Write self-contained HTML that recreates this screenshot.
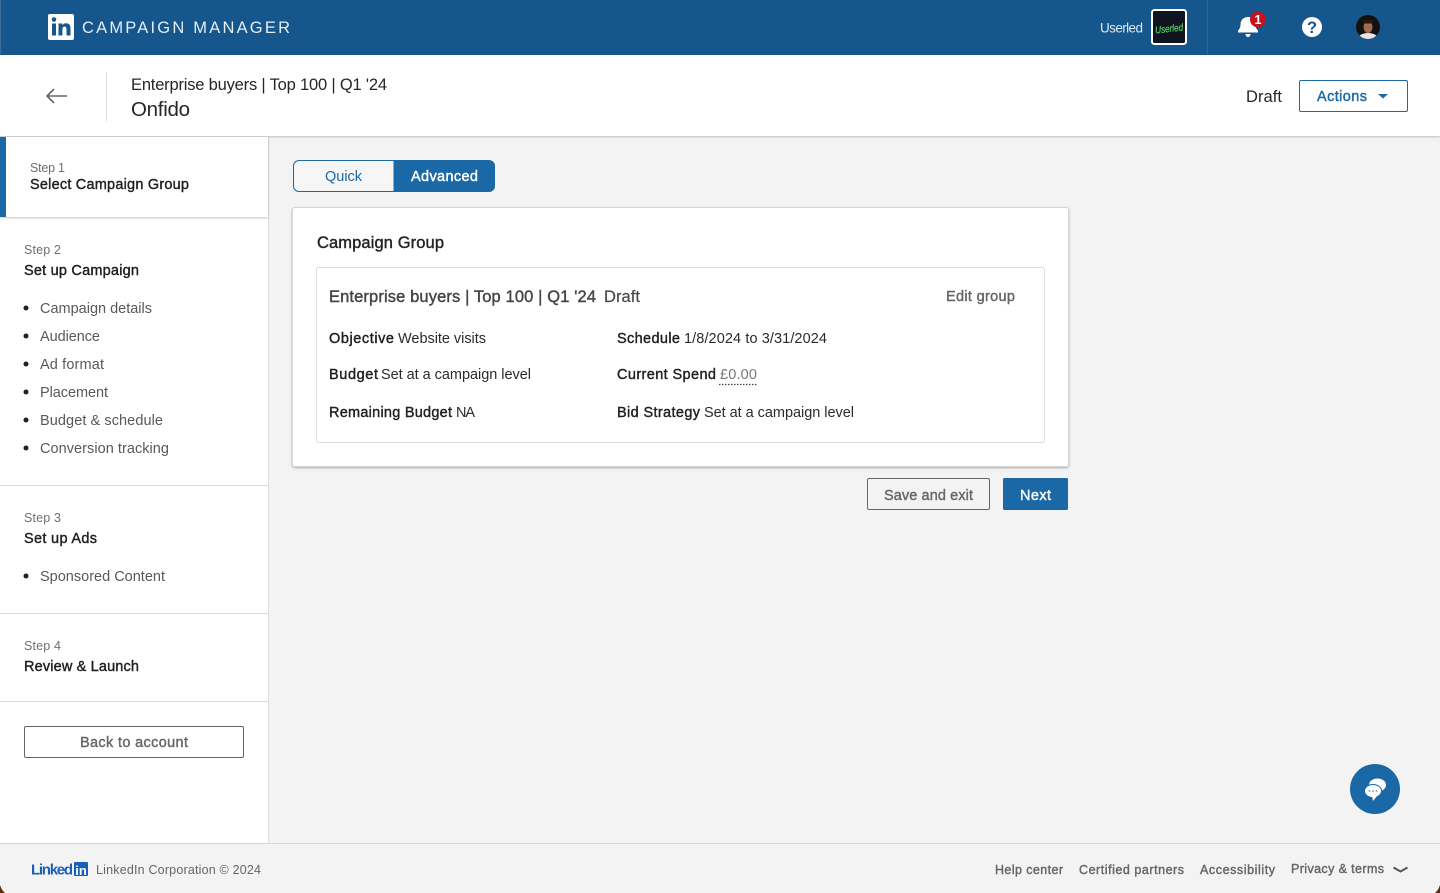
<!DOCTYPE html>
<html lang="en">
<head>
<meta charset="utf-8">
<title>Campaign Manager</title>
<style>
html,body{margin:0;padding:0;width:1440px;height:893px;overflow:hidden;background:#f3f3f3}
svg{display:block;position:absolute;left:0;top:0}
text{font-family:"Liberation Sans",Arial,sans-serif;white-space:pre}
.m{stroke:currentColor;stroke-width:.4px}
.b{font-weight:700}
.g12{font-size:12.500px;fill:#6e6e6e}
.h14{font-size:14.500px;fill:#1f1f1f;color:#1f1f1f}
.li{font-size:14.500px;fill:#595959}
.n{font-size:14.500px;fill:#2b2b2b}
.f{font-size:12.500px;fill:#666;color:#666}
</style>
</head>
<body>
<svg width="1440" height="893" viewBox="0 0 1440 893" xmlns="http://www.w3.org/2000/svg">
<defs>
<filter id="s1" x="-5%" y="-20%" width="110%" height="140%"><feDropShadow dx="0" dy="1" stdDeviation="1" flood-color="#000" flood-opacity=".22"/></filter>
<filter id="s2" x="-3%" y="-3%" width="106%" height="108%"><feDropShadow dx="0" dy="1" stdDeviation="1" flood-color="#000" flood-opacity=".3"/></filter>
<clipPath id="av"><circle cx="1368" cy="27" r="12"/></clipPath>
</defs>

<rect width="1440" height="893" fill="#f3f3f3"/>

<!-- top nav -->
<rect width="1440" height="55" fill="#15568c"/>
<rect x="0" y="0" width="1" height="55" fill="#3a6f9c"/>
<rect x="48" y="14" width="26" height="26" rx="2" fill="#fff"/>
<rect x="52" y="23.500" width="4" height="12" fill="#15568c"/>
<circle cx="54" cy="19.500" r="2.300" fill="#15568c"/>
<path d="M58.500 23.500h3.800v1.700c.8-1.200 2-2 3.800-2 3 0 4.400 1.900 4.400 5v7.300h-4v-6.500c0-1.500-.6-2.400-1.900-2.400-1.300 0-2.200.9-2.200 2.500v6.400h-3.900z" fill="#15568c"/>
<text x="82" y="33" font-size="16.500" fill="#e6edf3" textLength="208" lengthAdjust="spacing">CAMPAIGN MANAGER</text>
<text x="1100" y="32.500" font-size="13.500" fill="#dfe8f0" textLength="43" lengthAdjust="spacing">Userled</text>
<rect x="1152" y="10" width="34" height="34" rx="2.500" fill="#10141f" stroke="#fff" stroke-width="2"/>
<text x="1155" y="32" font-size="10" font-style="italic" fill="#4fc763" stroke="#4fc763" stroke-width=".3" textLength="28" lengthAdjust="spacingAndGlyphs" transform="rotate(-6 1169 28)" font-family="Liberation Serif">Userled</text>
<rect x="1207" y="0" width="1" height="55" fill="#2d6797"/>
<!-- bell -->
<path d="M1248 17c-5 0-7.500 3.500-7.500 7.500 0 2.800-.9 4.700-2.500 6v2h20v-2c-1.600-1.300-2.500-3.200-2.500-6 0-4-2.500-7.500-7.500-7.500z" fill="#fff"/>
<path d="M1245.500 34h5c0 1.700-1.100 3-2.500 3s-2.500-1.300-2.500-3z" fill="#fff"/>
<circle cx="1258" cy="19.500" r="8" fill="#c4141f"/>
<text x="1258" y="24" font-size="12.500" class="b" fill="#fff" text-anchor="middle">1</text>
<!-- help -->
<circle cx="1312" cy="27" r="10" fill="#fff"/>
<text x="1312" y="33" font-size="16.500" class="b" fill="#15568c" text-anchor="middle">?</text>
<!-- avatar -->
<g clip-path="url(#av)">
<rect x="1356" y="15" width="24" height="24" fill="#15110f"/>
<ellipse cx="1368" cy="39.500" rx="10.500" ry="6.500" fill="#efe3ea"/>
<ellipse cx="1368" cy="27" rx="4.500" ry="6" fill="#a06a53"/>
<rect x="1363.500" y="20" width="9" height="3.500" rx="1.500" fill="#2a1c16"/>
</g>

<!-- sub header -->
<rect x="0" y="55" width="1440" height="81" fill="#fff" filter="url(#s1)"/>
<path d="M47 96h20M54 89l-7 7 7 7" fill="none" stroke="#666" stroke-width="1.600"/>
<rect x="106" y="72" width="1" height="49" fill="#dcdcdc"/>
<text x="131" y="90" font-size="16.500" fill="#262626" textLength="256" lengthAdjust="spacing">Enterprise buyers | Top 100 | Q1 '24</text>
<text x="131" y="116" font-size="20.500" fill="#262626" textLength="59" lengthAdjust="spacing">Onfido</text>
<text x="1246" y="102" font-size="16.500" fill="#262626" textLength="36" lengthAdjust="spacing">Draft</text>
<rect x="1299.500" y="80.500" width="108" height="31" rx="1.500" fill="#fff" stroke="#1a68a6"/>
<text x="1317" y="101" font-size="14.500" class="m" style="color:#1a68a6" fill="#1a68a6" textLength="50" lengthAdjust="spacing">Actions</text>
<path d="M1378 94h10l-5 4.500z" fill="#1a68a6"/>

<!-- sidebar -->
<rect x="0" y="137" width="268" height="706" fill="#fff"/>
<rect x="268" y="137" width="1" height="706" fill="#dcdcdc"/>
<rect x="0" y="137" width="268" height="80" fill="#fff" filter="url(#s1)"/>
<rect x="0" y="137" width="6" height="80" fill="#1a68a6"/>
<text x="30" y="172" class="g12" textLength="35" lengthAdjust="spacing">Step 1</text>
<text x="30" y="189" class="h14 m" textLength="159" lengthAdjust="spacing">Select Campaign Group</text>

<text x="24" y="254" class="g12" textLength="37" lengthAdjust="spacing">Step 2</text>
<text x="24" y="275" class="h14 m" textLength="115" lengthAdjust="spacing">Set up Campaign</text>
<g fill="#222">
<circle cx="26" cy="308" r="2.500"/><circle cx="26" cy="336" r="2.500"/><circle cx="26" cy="364" r="2.500"/>
<circle cx="26" cy="392" r="2.500"/><circle cx="26" cy="420" r="2.500"/><circle cx="26" cy="448" r="2.500"/>
<circle cx="26" cy="576" r="2.500"/>
</g>
<text x="40" y="313" class="li" textLength="112" lengthAdjust="spacing">Campaign details</text>
<text x="40" y="341" class="li" textLength="60" lengthAdjust="spacing">Audience</text>
<text x="40" y="369" class="li" textLength="64" lengthAdjust="spacing">Ad format</text>
<text x="40" y="397" class="li" textLength="68" lengthAdjust="spacing">Placement</text>
<text x="40" y="425" class="li" textLength="123" lengthAdjust="spacing">Budget &amp; schedule</text>
<text x="40" y="453" class="li" textLength="129" lengthAdjust="spacing">Conversion tracking</text>
<rect x="0" y="485" width="268" height="1" fill="#dcdcdc"/>

<text x="24" y="522" class="g12" textLength="37" lengthAdjust="spacing">Step 3</text>
<text x="24" y="543" class="h14 m" textLength="73" lengthAdjust="spacing">Set up Ads</text>
<text x="40" y="581" class="li" textLength="125" lengthAdjust="spacing">Sponsored Content</text>
<rect x="0" y="613" width="268" height="1" fill="#dcdcdc"/>

<text x="24" y="650" class="g12" textLength="37" lengthAdjust="spacing">Step 4</text>
<text x="24" y="671" class="h14 m" textLength="115" lengthAdjust="spacing">Review &amp; Launch</text>
<rect x="0" y="701" width="268" height="1" fill="#dcdcdc"/>

<rect x="24.500" y="726.500" width="219" height="31" rx="1.500" fill="#fff" stroke="#666"/>
<text x="80" y="747" font-size="14.500" class="m" style="color:#666" fill="#666" textLength="108" lengthAdjust="spacing">Back to account</text>

<!-- toggle -->
<path d="M394 160.500H299a5.500 5.500 0 0 0-5.500 5.500v20a5.500 5.500 0 0 0 5.500 5.500h95z" fill="#f6f6f6" stroke="#1a68a6"/>
<path d="M394 160h95a6 6 0 0 1 6 6v20a6 6 0 0 1-6 6h-95z" fill="#1a68a6"/>
<text x="325" y="181" font-size="14.500" fill="#1a68a6" textLength="37" lengthAdjust="spacing">Quick</text>
<text x="411" y="181" font-size="14.500" class="m" style="color:#fff" fill="#fff" textLength="67" lengthAdjust="spacing">Advanced</text>

<!-- card -->
<rect x="292.500" y="207.500" width="776" height="259" rx="2.500" fill="#fff" stroke="#d6d6d6" filter="url(#s2)"/>
<text x="317" y="248" font-size="16.500" class="m" style="color:#222" fill="#222" textLength="127" lengthAdjust="spacing">Campaign Group</text>
<rect x="316.500" y="267.500" width="728" height="175" rx="2" fill="#fff" stroke="#dcdcdc"/>
<text x="329" y="302" font-size="16.500" class="m" style="color:#444" fill="#444" textLength="267" lengthAdjust="spacing">Enterprise buyers | Top 100 | Q1 '24</text>
<text x="604" y="302" font-size="16.500" fill="#444" stroke="#444" stroke-width=".15" textLength="36" lengthAdjust="spacing">Draft</text>
<text x="946" y="301" font-size="14.500" class="m" style="color:#666" fill="#666" textLength="69" lengthAdjust="spacing">Edit group</text>

<text x="329" y="343" class="h14 m" textLength="65" lengthAdjust="spacing">Objective</text>
<text x="398" y="343" class="n" textLength="88" lengthAdjust="spacing">Website visits</text>
<text x="617" y="343" class="h14 m" textLength="63" lengthAdjust="spacing">Schedule</text>
<text x="684" y="343" class="n" textLength="143" lengthAdjust="spacing">1/8/2024 to 3/31/2024</text>

<text x="329" y="379" class="h14 m" textLength="49" lengthAdjust="spacing">Budget</text>
<text x="381" y="379" class="n" textLength="150" lengthAdjust="spacing">Set at a campaign level</text>
<text x="617" y="379" class="h14 m" textLength="99" lengthAdjust="spacing">Current Spend</text>
<text x="720" y="379" font-size="14.500" fill="#777" textLength="37" lengthAdjust="spacing">£0.00</text>
<line x1="719" y1="384.500" x2="758" y2="384.500" stroke="#444" stroke-width="1.300" stroke-dasharray="1.500 1.500"/>

<text x="329" y="417" class="h14 m" textLength="123" lengthAdjust="spacing">Remaining Budget</text>
<text x="456" y="417" class="n" textLength="19" lengthAdjust="spacing">NA</text>
<text x="617" y="417" class="h14 m" textLength="83" lengthAdjust="spacing">Bid Strategy</text>
<text x="704" y="417" class="n" textLength="150" lengthAdjust="spacing">Set at a campaign level</text>

<!-- actions -->
<rect x="867.500" y="478.500" width="122" height="31" rx="1.500" fill="#f3f3f3" stroke="#666"/>
<text x="884" y="500" font-size="14.500" class="m" style="color:#666" fill="#666" textLength="89" lengthAdjust="spacing">Save and exit</text>
<rect x="1003" y="478" width="65" height="32" rx="1.500" fill="#1a68a6"/>
<text x="1020" y="500" font-size="14.500" class="m" style="color:#fff" fill="#fff" textLength="31" lengthAdjust="spacing">Next</text>

<!-- chat -->
<circle cx="1375" cy="789" r="25" fill="#1a68a6"/>
<ellipse cx="1377.500" cy="785" rx="8.500" ry="6.500" fill="#fff"/>
<ellipse cx="1373" cy="791" rx="8.500" ry="6.500" fill="#fff" stroke="#1a68a6" stroke-width="1"/>
<path d="M1372 796l1 5 4-5z" fill="#fff"/>
<circle cx="1369.500" cy="791" r="1" fill="#7fa9cc"/><circle cx="1373" cy="791" r="1" fill="#7fa9cc"/><circle cx="1376.500" cy="791" r="1" fill="#7fa9cc"/>

<!-- footer -->
<rect x="0" y="843" width="1440" height="50" fill="#f3f3f3"/>
<rect x="0" y="843" width="1440" height="1" fill="#d9d9d9"/>
<text x="31" y="874.500" font-size="15" class="b" fill="#1b5fb5" textLength="42" lengthAdjust="spacing">Linked</text>
<rect x="74" y="862" width="14" height="14" rx="1" fill="#1b5fb5"/>
<text x="81" y="875" font-size="13" class="b" fill="#fff" text-anchor="middle">in</text>
<text x="96" y="874" class="f" textLength="165" lengthAdjust="spacing">LinkedIn Corporation © 2024</text>
<text x="995" y="874" class="f m" textLength="68" lengthAdjust="spacing">Help center</text>
<text x="1079" y="874" class="f m" textLength="105" lengthAdjust="spacing">Certified partners</text>
<text x="1200" y="874" class="f m" textLength="75" lengthAdjust="spacing">Accessibility</text>
<text x="1291" y="873" class="f m" textLength="93" lengthAdjust="spacing">Privacy &amp; terms</text>
<path d="M1393.500 867.500l7 4 7-4" fill="none" stroke="#555" stroke-width="2"/>

<!-- window corners -->
<path d="M0 885v8h5c-2.500-2-4-5-5-8z" fill="#5a2c10"/>
<path d="M1440 885v8h-5c2.500-2 4-5 5-8z" fill="#5a2c10"/>
</svg>
</body>
</html>
